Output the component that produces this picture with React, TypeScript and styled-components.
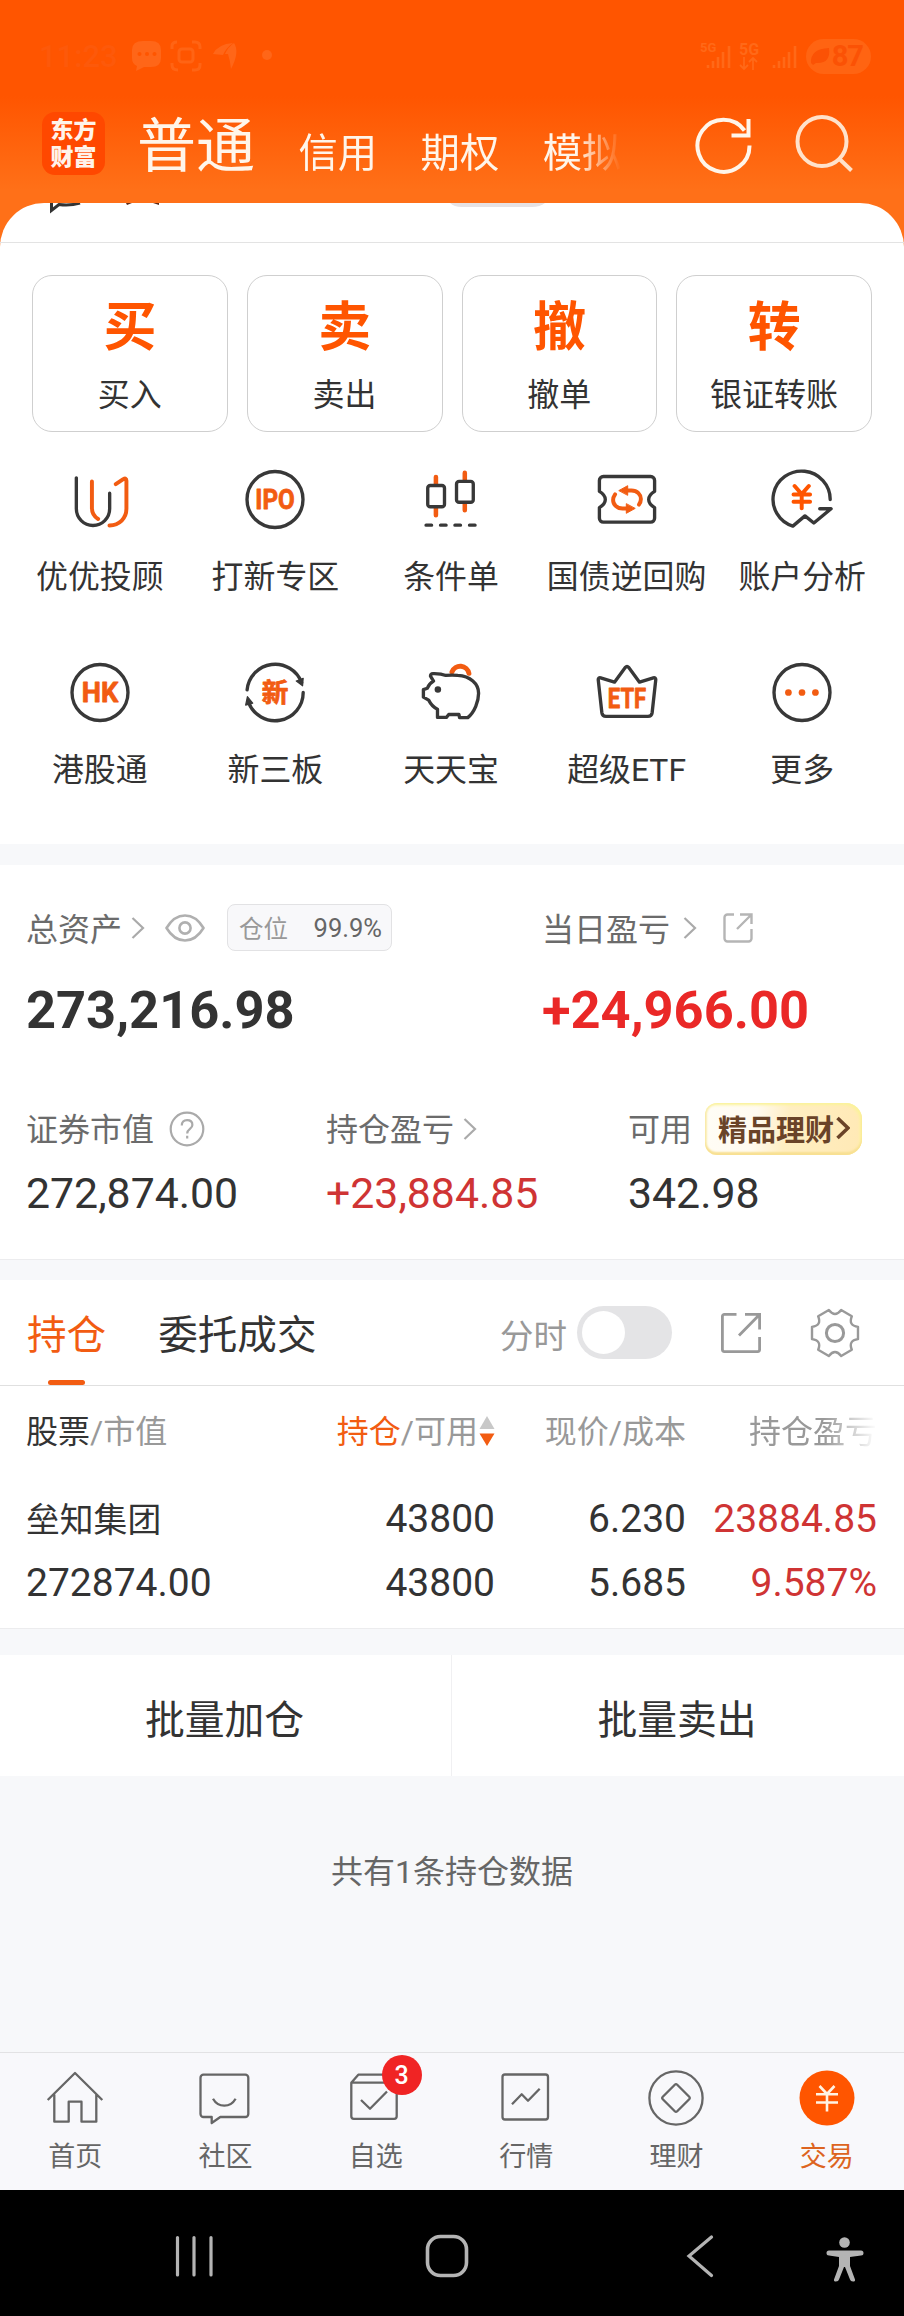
import React from 'react';
import styled, { createGlobalStyle } from 'styled-components';

const ORANGE = '#f25c12';
const BRIGHT = '#ff5500';
const INK = '#333333';
const RED = '#cf3434';

const GlobalStyle = createGlobalStyle`
  * { box-sizing: border-box; }
  body {
    margin: 0;
    background: #f7f8fa;
    color: ${INK};
    font-family: Roboto, "Noto Sans CJK SC", sans-serif;
    -webkit-font-smoothing: antialiased;
  }
`;

const Page = styled.div`
  width: 904px;
  height: 2316px;
  display: flex;
  flex-direction: column;
  overflow: hidden;
  white-space: nowrap;
  background: linear-gradient(#ff5500 0, #ff5500 96px, #ff7018 190px, #ff7018 250px, #f7f8fa 250px);
`;

/* ---------- status bar and header ---------- */

const StatusBar = styled.div`
  height: 112px;
  padding: 0 33px 0 39px;
  display: flex;
  align-items: center;
  justify-content: space-between;
`;

const StatusGroup = styled.div`
  display: flex;
  align-items: center;
`;

const Clock = styled.span`
  width: 92px;
  font-size: 31px;
  font-weight: 500;
  color: #fd590a;
`;

const Battery = styled.span`
  width: 65px;
  height: 35px;
  margin-left: 8px;
  padding-right: 8px;
  border-radius: 18px;
  background: #ff6412;
  color: #fb5205;
  display: flex;
  align-items: center;
  justify-content: space-between;
  font-size: 29px;
  font-weight: 700;
  letter-spacing: -1px;
`;

const Header = styled.header`
  height: 91px;
  padding-left: 42px;
  display: flex;
`;

const Logo = styled.div`
  width: 63px;
  height: 63px;
  border-radius: 13px;
  background: #ff4800;
  color: #fff3ea;
  padding-top: 3px;
  text-align: center;
  font: 900 23px/27px "Noto Sans CJK SC", sans-serif;
`;

const AccountTabs = styled.nav`
  width: 489px;
  height: 86px;
  margin: -5px 0 0 32px;
  display: flex;
  align-items: baseline;
  gap: 43.5px;
  overflow: hidden;
  -webkit-mask-image: linear-gradient(90deg, #000 440px, transparent 484px);
  mask-image: linear-gradient(90deg, #000 440px, transparent 484px);
`;

const AccountTab = styled.span<{ $active?: boolean }>`
  color: #fff5ea;
  font-size: ${(p) => (p.$active ? 59 : 39.3)}px;
  line-height: 80px;
`;

const HeaderIcons = styled.div`
  margin-left: 67px;
  display: flex;
  gap: 40px;
`;

/* ---------- white sheet ---------- */

const Sheet = styled.main`
  background: #fff;
  border-radius: 44px 44px 0 0;
`;

const PeekStrip = styled.div`
  height: 40px;
  border-bottom: 1px solid #e3e3e3;
  & > svg { display: block; }
`;

const Actions = styled.div`
  padding: 32px 32px 0;
  display: grid;
  grid-template-columns: repeat(4, 1fr);
  gap: 19px;
`;

const ActionCard = styled.div`
  height: 157px;
  border: 1px solid #cfcfcf;
  border-radius: 20px;
  display: flex;
  flex-direction: column;
  align-items: center;
`;

const ActionGlyph = styled.span`
  margin-top: 15px;
  color: ${BRIGHT};
  font: 700 53px/64px "Noto Sans CJK SC", sans-serif;
`;

const ActionLabel = styled.span`
  margin-top: 20px;
  font-size: 32px;
  line-height: 40px;
`;

const Shortcuts = styled.div`
  padding: 33px 14px 54px 12px;
  display: grid;
  grid-template-columns: repeat(5, 1fr);
  row-gap: 61px;
`;

const Shortcut = styled.div`
  height: 132px;
  display: flex;
  flex-direction: column;
  align-items: center;
  gap: 23px;
  font-size: 31.9px;
  line-height: 40px;
`;

const Band = styled.div<{ $h: number; $line?: boolean }>`
  height: ${(p) => p.$h}px;
  background: #f7f8fa;
  border-top: ${(p) => (p.$line ? '1px solid #ececee' : '0')};
`;

/* ---------- assets ---------- */

const Assets = styled.section`
  height: 394px;
  padding: 39px 26px 0;
  background: #fff;
`;

const AssetGrid = styled.div<{ $cols: string; $top?: number }>`
  display: grid;
  grid-template-columns: ${(p) => p.$cols};
  margin-top: ${(p) => p.$top ?? 0}px;
`;

const LabelRow = styled.div<{ $h: number }>`
  height: ${(p) => p.$h}px;
  display: flex;
  align-items: center;
  font-size: 32px;
  color: #6b6b6b;
  & > svg { flex: none; }
`;

const LabelText = styled.span<{ $drop: number }>`
  height: 38px;
  line-height: 38px;
  margin-top: ${(p) => p.$drop}px;
`;

const BigValue = styled.div<{ $up?: boolean }>`
  margin-top: 29px;
  font-size: 52.4px;
  line-height: 60px;
  font-weight: 700;
  color: ${(p) => (p.$up ? '#ea2827' : INK)};
`;

const Value = styled.div<{ $up?: boolean }>`
  margin-top: 13px;
  font-size: 42.8px;
  line-height: 50px;
  color: ${(p) => (p.$up ? RED : INK)};
`;

const PositionPill = styled.span`
  width: 165px;
  height: 47px;
  margin-left: 22px;
  padding: 0 9px 0 11px;
  border: 1px solid #e2e2e4;
  border-radius: 8px;
  background: #f8f8fa;
  display: flex;
  align-items: center;
  justify-content: space-between;
  font-size: 25.5px;
  color: #666;
`;

const Muted = styled.span`
  color: #999;
  font-size: 24.5px;
`;

const GoldPill = styled.span`
  width: 157px;
  height: 52px;
  margin-left: 13px;
  padding: 0 12px 2px 13px;
  border-radius: 12px 16px 16px 12px;
  background: linear-gradient(100deg, #fffdf6 0%, #fffaf0 32%, #ffeec2 52%, #ffe9b5 100%);
  box-shadow: inset 0 -3px 2px #f8e092, inset -2px 2px 3px #fbf39a, inset 2px 0 2px #faeeb4;
  color: #6a4328;
  display: flex;
  align-items: center;
  font-size: 29px;
  font-weight: 700;
`;

/* ---------- positions ---------- */

const PositionTabs = styled.div`
  height: 106px;
  padding: 0 44px 0 27px;
  border-bottom: 1px solid #e0e0e0;
  background: #fff;
  display: flex;
  align-items: center;
`;

const PositionTab = styled.div<{ $active?: boolean }>`
  height: 105px;
  margin-right: 52px;
  display: flex;
  flex-direction: column;
  align-items: center;
  justify-content: space-between;
  font-size: 39.6px;
  line-height: 112px;
  color: ${(p) => (p.$active ? ORANGE : INK)};
`;

const TabMarker = styled.i`
  width: 37px;
  height: 5px;
  margin-top: -12px;
  border-radius: 3px;
  background: ${ORANGE};
`;

const ToggleLabel = styled.span`
  margin: 1px 10px 0 auto;
  font-size: 33.5px;
  color: #999;
`;

const Toggle = styled.span`
  width: 95px;
  height: 53px;
  padding: 5px;
  margin: 0 48px 0 0;
  border-radius: 27px;
  background: #e4e4e6;
  &::after {
    content: '';
    display: block;
    width: 43px;
    height: 43px;
    border-radius: 50%;
    background: #fff;
  }
`;

const Table = styled.div`
  height: 242px;
  padding-top: 19px;
  background: #fff;
`;

const TableRow = styled.div<{ $h: number; $size: number }>`
  height: ${(p) => p.$h}px;
  padding: 0 26px;
  display: grid;
  grid-template-columns: 278px 191px 191px 191px;
  align-items: center;
  font-size: ${(p) => p.$size}px;
`;

const Cell = styled.div<{ $up?: boolean }>`
  display: flex;
  align-items: center;
  justify-content: flex-end;
  color: ${(p) => (p.$up ? RED : 'inherit')};
  &:first-child { justify-content: flex-start; }
`;

const HeadCell = styled(Cell)<{ $fade?: boolean }>`
  color: #999;
  & > svg { margin-top: 3px; }
  -webkit-mask-image: ${(p) => (p.$fade ? 'linear-gradient(90deg, #000 138px, transparent 191px)' : 'none')};
  mask-image: ${(p) => (p.$fade ? 'linear-gradient(90deg, #000 138px, transparent 191px)' : 'none')};
`;

const Em = styled.span<{ $c: string }>`
  color: ${(p) => p.$c};
`;

const StockName = styled.span`
  margin-bottom: 3px;
  font-size: 33.8px;
`;

const BatchBar = styled.div`
  height: 121px;
  background: #fff;
  display: grid;
  grid-template-columns: 451px 1fr;
`;

const BatchButton = styled.div`
  display: flex;
  align-items: center;
  justify-content: center;
  padding: 1px 2px 0 0;
  font-size: 39.8px;
  & + & { border-left: 1px solid #f0f0f2; }
`;

const Summary = styled.div`
  height: 276px;
  background: #f7f8fa;
  display: flex;
  justify-content: center;
  padding-top: 76px;
  font-size: 32px;
  line-height: 40px;
  color: #666;
`;

/* ---------- bottom bars ---------- */

const BottomNav = styled.nav`
  height: 138px;
  padding-right: 2px;
  border-top: 1px solid #e2e2e4;
  background: #f8f8fb;
  display: grid;
  grid-template-columns: repeat(6, 1fr);
`;

const NavItem = styled.div<{ $active?: boolean }>`
  position: relative;
  padding-top: 15px;
  display: flex;
  flex-direction: column;
  align-items: center;
  font-size: 27px;
  line-height: 34px;
  color: ${(p) => (p.$active ? '#dd6420' : '#666')};
  & > svg { margin-bottom: 12px; flex: none; }
`;

const Badge = styled.span`
  position: absolute;
  left: 81px;
  top: 2px;
  width: 40px;
  height: 40px;
  border-radius: 50%;
  background: #f02424;
  color: #fff;
  text-align: center;
  font-size: 25px;
  font-weight: 500;
  line-height: 41px;
`;

const SystemBar = styled.div`
  height: 126px;
  background: #000;
  & > svg { display: block; }
`;

const Spacer = styled.span<{ $w: number }>`
  flex: none;
  width: ${(p) => p.$w}px;
`;

/* ---------- icons ---------- */

type IconProps = { children: React.ReactNode; size?: number };

const LineIcon = ({ children, size = 70 }: IconProps) => (
  <svg
    width={size}
    height={size}
    viewBox={`${-size / 2} ${-size / 2} ${size} ${size}`}
    fill="none"
    stroke="#383838"
    strokeWidth="3.4"
    strokeLinecap="round"
    strokeLinejoin="round"
  >
    {children}
  </svg>
);

const IconText = ({ y, w, children, size = 28 }: { y: number; w: number; children: string; size?: number }) => (
  <text
    x="0"
    y={y}
    textAnchor="middle"
    textLength={w}
    lengthAdjust="spacingAndGlyphs"
    fontSize={size}
    fontWeight="700"
    fill={ORANGE}
    stroke={ORANGE}
    strokeWidth="0.8"
  >
    {children}
  </text>
);

const RING = <circle r="28.4" />;

const shortcuts: { label: string; icon: React.ReactNode }[] = [
  {
    label: '优优投顾',
    icon: (
      <g transform="translate(-.7 0)">
        <path d="M-23.3-22V9.5a16.9 16.9 0 0 0 33.8 0V-6.3" />
        <path
          stroke={ORANGE}
          strokeWidth="4"
          d="M-7.5-18.3V8.5c0 5 2.5 9 6.3 11.3M16.7-15.5l7.6-5.1q3.2-1.8 3.2 1.6V9.5c0 9.5-7 16.6-17.2 16.8"
        />
      </g>
    ),
  },
  { label: '打新专区', icon: <>{RING}<IconText y={10} w={40}>IPO</IconText></> },
  {
    label: '条件单',
    icon: (
      <>
        <path stroke={ORANGE} strokeWidth="4.6" d="M-15.3-22.7V16M14-27V11" />
        <rect x="-23.6" y="-14.2" width="17" height="21.6" rx="2.6" fill="#fff" />
        <rect x="5.6" y="-18.4" width="17" height="21.2" rx="2.6" fill="#fff" />
        <path d="M-25.3 26h5.6M-10.6 26H-5M4 26h5.6M18.8 26h5.6" />
      </>
    ),
  },
  {
    label: '国债逆回购',
    icon: (
      <>
        <path d="M-24-23.3H24a4 4 0 0 1 4 4V-8.2c-5 3-6 5.4-6 8.2s1 5.2 6 8.2V19a4 4 0 0 1-4 4H-24a4 4 0 0 1-4-4V8.2c5-3 6-5.4 6-8.2s-1-5.2-6-8.2V-19.3a4 4 0 0 1 4-4z" />
        {[0, 180].map((turn) => (
          <g key={turn} transform={`rotate(${turn})`} stroke={ORANGE}>
            <path strokeWidth="4" d="M0-9.2h4.5c6 0 9.6 4.2 9.6 8.7q0 3-2 5.8" />
            <path strokeWidth="1" fill={ORANGE} d="M-8-9.2L.7-14V-4.6z" />
          </g>
        ))}
      </>
    ),
  },
  {
    label: '账户分析',
    icon: (
      <>
        <path d="M28.6 0A29 28.6 0 1 0-9.3 27L3 16.6l9 7.3L29.5 9.4H18" />
        <path stroke={BRIGHT} strokeWidth="4" d="M-7.5-13.7L-.3-5.5l7.2-8.2M-8.6-5h16.8M-8.6 2.3H8.2M-.3-5V9" />
      </>
    ),
  },
  { label: '港股通', icon: <>{RING}<IconText y={10} w={37}>HK</IconText></> },
  {
    label: '新三板',
    icon: (
      <>
        <path d="M-28.3-2.6A28.6 28.6 0 0 1 27-10M28.6 0A28.6 28.6 0 0 1-26.8 10" />
        <path
          fill="#383838"
          strokeWidth="1.2"
          d="M21.6-11.7L28.6-14.4 28-6.8zM-22.6 10.8L-29.8 12.8-28 4.2z"
        />
        <IconText y={10} w={27} size={27}>新</IconText>
      </>
    ),
  },
  {
    label: '天天宝',
    icon: (
      <>
        <path stroke={ORANGE} strokeWidth="5" d="M1-21a9 9 0 0 1 17.2 1.6" />
        <path d="M-20.8-16.5q-.3-2.6 2.6-2.7 8-.2 13 1.9 6.5-.6 12 0C19.5-16.5 28-9 28 .8c0 8-4 19-11 24.700H8.7L8 22.3H-2.3L-4.7 25.3h-9V17q-5.6-2.4-9-9.3L-28 4.7V-3l4-1.3q1.5-4.5 6.3-7.2z" />
        <circle cx="-13.3" cy="-3" r="3.3" fill="#383838" stroke="none" />
      </>
    ),
  },
  {
    label: '超级ETF',
    icon: (
      <>
        <path d="M-29.2-13q0-2.4 2.5-1.9L-12.7-10.5-1.6-25.5q1.6-2 3.2 0L12.7-10.5 26.7-14.9q2.5-.5 2.5 1.9L25.5 20.5q-.5 3.7-4.2 3.7H-21.3q-3.7 0-4.2-3.7z" />
        <IconText y={15.3} w={39}>ETF</IconText>
      </>
    ),
  },
  {
    label: '更多',
    icon: (
      <>
        {RING}
        <g fill={ORANGE} stroke="none">
          <circle cx="-13.8" r="3.4" />
          <circle r="3.4" />
          <circle cx="13.6" r="3.4" />
        </g>
      </>
    ),
  },
];

const navItems: { label: string; icon: React.ReactNode; badge?: string; active?: boolean }[] = [
  {
    label: '首页',
    icon: <path d="M-27.3 2L0-25 27.3 2M-20.7-3.5V23.7H-6.3V3.7H6.5V23.7H21.3V-3.5" />,
  },
  {
    label: '社区',
    icon: (
      <path d="M-21.5-23.3H20.3a3 3 0 0 1 3 3V16a3 3 0 0 1-3 3H-4.7L-13.3 25V19h-8.2a3 3 0 0 1-3-3V-20.3a3 3 0 0 1 3-3zM-12 .7Q-8 7.7-.7 7.7T10.6.7" />
    ),
  },
  {
    label: '自选',
    badge: '3',
    icon: (
      <path d="M-24.7-15.3H20.7V18.3a2.5 2.5 0 0 1-2.5 2.5H-22.2a2.5 2.5 0 0 1-2.5-2.5zL-17.7-23.3H13.3L20.7-15.3M-15 2l9 8.8L11-6.5" />
    ),
  },
  {
    label: '行情',
    icon: (
      <>
        <rect x="-23.5" y="-23.5" width="45.5" height="45" rx="2.5" />
        <path d="M-14 6.3L-4.3-3.7 2 2.7 13.7-9.3" />
      </>
    ),
  },
  {
    label: '理财',
    icon: (
      <>
        <circle r="26.6" />
        <path d="M-1.2-13.3q1.2-1.2 2.4 0l12 12.1q1.2 1.2 0 2.4l-12 12.1q-1.2 1.2-2.4 0l-12-12.1q-1.2-1.2 0-2.4z" />
      </>
    ),
  },
  {
    label: '交易',
    active: true,
    icon: (
      <>
        <circle r="27.5" fill={BRIGHT} stroke="none" />
        <path stroke="#fff3e4" strokeWidth="2.6" d="M-7.5-12L0-4 7.5-12M-11-3.7H11M-11 4.5H11M0-4V13.5" />
      </>
    ),
  },
];

const Chevron = ({ ml, color = '#aaa', w = 2.2 }: { ml: number; color?: string; w?: number }) => (
  <svg width={14 + ml} height="24" viewBox={`${-ml} 0 ${14 + ml} 24`} fill="none" stroke={color} strokeWidth={w}>
    <path d="M1.5 2L12 12 1.5 22" />
  </svg>
);

const EyeIcon = () => (
  <svg width="40" height="28" viewBox="0 0 40 28" fill="none" stroke="#b0b0b0" strokeWidth="2.6">
    <path d="M1.5 14Q9 1.5 20 1.5T38.5 14Q31 26.5 20 26.5T1.5 14z" strokeLinejoin="round" />
    <circle cx="20" cy="14" r="5.6" />
  </svg>
);

const SmallShareIcon = () => (
  <svg width="30" height="30" viewBox="0 0 30 30" fill="none" stroke="#b5b5b5" strokeWidth="2.4">
    <path d="M11 1.500H4.5a3 3 0 0 0-3 3v21a3 3 0 0 0 3 3h21a3 3 0 0 0 3-3V16M17 1.5h11.5V11M28 2L14 16" />
  </svg>
);

const ShareIcon = () => (
  <svg width="42" height="42" viewBox="0 0 42 42" fill="none" stroke="#999" strokeWidth="2.8">
    <path d="M16.5 2.4H4.4a2 2 0 0 0-2 2v33.2a2 2 0 0 0 2 2h33.2a2 2 0 0 0 2-2V25M25 2.4H39.6V17.5M39.6 2.4L19 23.5" />
  </svg>
);

const HelpIcon = () => (
  <svg width="36" height="36" viewBox="0 0 36 36" fill="none" stroke="#aaa" strokeWidth="2.2">
    <circle cx="18" cy="18" r="16.3" />
    <path d="M12.8 14.5q0-5.3 5.3-5.3t5.3 4.8c0 4-5.2 4-5.2 8.5M18.2 24.8v2.7" />
  </svg>
);

/* six-lobed gear: flat lobes joined by concave curves */
const gearPath = (() => {
  const at = (deg: number, r: number) => {
    const a = (deg * Math.PI) / 180;
    return `${(r * Math.cos(a)).toFixed(2)} ${(r * Math.sin(a)).toFixed(2)}`;
  };
  let d = `M${at(-15, 23.8)}`;
  for (let k = 0; k < 6; k += 1) {
    const base = k * 60;
    d += `L${at(base + 15, 23.8)}Q${at(base + 30, 15)} ${at(base + 45, 23.8)}`;
  }
  return `${d}z`;
})();

const GearIcon = () => (
  <svg width="50" height="50" viewBox="-25 -25 50 50" fill="none" stroke="#999" strokeLinejoin="round">
    <path d={gearPath} strokeWidth="2.4" />
    <circle r="8.6" strokeWidth="3" />
  </svg>
);

const StatusIcons = () => (
  <svg width="144" height="32" viewBox="0 0 144 32" fill="none" stroke="#ff6414" strokeWidth="3">
    <path
      stroke="none"
      fill="#ff6618"
      d="M12 1h8q10 0 10 9v8q0 9-10 9h-7l-8 4 1-5Q1 24 1 18v-8q0-9 11-9zM82 14Q87 4 102 3 95 8 92 15zM94 14Q97 7 103 3q6 9-3 26-1-9-3-15z"
    />
    <g stroke="none" fill="#ff5500">
      <circle cx="8.500" cy="14" r="2" />
      <circle cx="16" cy="14" r="2" />
      <circle cx="23.500" cy="14" r="2" />
    </g>
    <path d="M41 9V6q0-4 5-4M61 2h3q5 0 5 5v2M69 23v2q0 5-5 5h-3M47 30q-6 0-6-5v-2" />
    <rect x="48" y="9" width="14" height="13" rx="3" />
    <circle cx="136" cy="15" r="5" stroke="none" fill="#ff6618" />
  </svg>
);

const SignalIcons = () => (
  <svg width="98" height="32" viewBox="0 0 98 32" fill="none" stroke="#ff6918" strokeWidth="2.6">
    <g fill="#ff6918" stroke="none" fontWeight="700">
      <text x="0" y="12" fontSize="13">5G</text>
      <text x="39" y="15" fontSize="16">5G</text>
    </g>
    <path d="M8 28v-3M13 28v-7M18 28V17M23 28V12M29 28V6M74 28v-3M79 28v-7M84 28V17M89 28V12M95 28V6" />
    <path strokeWidth="1.8" d="M44 17v12M40 25l4 4 4-4M53 30V18M49 22l4-4 4 4" />
  </svg>
);

const App = () => (
  <Page>
    <GlobalStyle />
    <StatusBar>
      <StatusGroup>
        <Clock>11:23</Clock>
        <StatusIcons />
      </StatusGroup>
      <StatusGroup>
        <SignalIcons />
        <Battery>
          <svg width="25" height="22" viewBox="0 0 25 22" fill="#fb5205">
            <path d="M5 18Q4 4 23 3q2 16-13 15l-3 2z" />
          </svg>
          87
        </Battery>
      </StatusGroup>
    </StatusBar>

    <Header>
      <Logo>东方<br />财富</Logo>
      <AccountTabs>
        <AccountTab $active>普通</AccountTab>
        <AccountTab>信用</AccountTab>
        <AccountTab>期权</AccountTab>
        <AccountTab>模拟</AccountTab>
      </AccountTabs>
      <HeaderIcons>
        <svg width="62" height="64" viewBox="0 0 62 64" fill="none" stroke="#fff5ea" strokeWidth="4">
          <path d="M56.5 33.5A26 26 0 1 1 51.5 18.5M55.5 7V23.5H38.5" />
        </svg>
        <svg width="62" height="64" viewBox="0 0 62 64" fill="none" stroke="#ffe2cb" strokeWidth="4">
          <circle cx="27" cy="29.5" r="24.5" />
          <path d="M45 47.5L56.5 58.5" />
        </svg>
      </HeaderIcons>
    </Header>

    <Sheet>
      <PeekStrip>
        <svg width="904" height="12" viewBox="0 0 904 12">
          <path d="M450 0H545Q540 4 532 4H462Q454 4 450 0z" fill="#e6e2e4" />
          <path d="M51.5 0V7.5L59 1.5Q70 3 80 0" fill="none" stroke="#333" strokeWidth="3" />
          <path d="M126 0h6l-5 2zM153 0h6v2z" fill="#5a2a18" />
        </svg>
      </PeekStrip>
      <Actions>
        {[['买', '买入'], ['卖', '卖出'], ['撤', '撤单'], ['转', '银证转账']].map(([glyph, label]) => (
          <ActionCard key={label}>
            <ActionGlyph>{glyph}</ActionGlyph>
            <ActionLabel>{label}</ActionLabel>
          </ActionCard>
        ))}
      </Actions>
      <Shortcuts>
        {shortcuts.map((s) => (
          <Shortcut key={s.label}>
            <LineIcon>{s.icon}</LineIcon>
            <span>{s.label}</span>
          </Shortcut>
        ))}
      </Shortcuts>
    </Sheet>

    <Band $h={21} />

    <Assets>
      <AssetGrid $cols="516px 1fr">
        <div>
          <LabelRow $h={47}>
            <LabelText $drop={4}>总资产</LabelText>
            <Chevron ml={9} />
            <Spacer $w={20} />
            <EyeIcon />
            <PositionPill>
              <Muted>仓位</Muted>99.9%
            </PositionPill>
          </LabelRow>
          <BigValue>273,216.98</BigValue>
        </div>
        <div>
          <LabelRow $h={47}>
            <LabelText $drop={4}>当日盈亏</LabelText>
            <Chevron ml={13} />
            <Spacer $w={26} />
            <SmallShareIcon />
          </LabelRow>
          <BigValue $up>+24,966.00</BigValue>
        </div>
      </AssetGrid>
      <AssetGrid $cols="300px 302px 1fr" $top={63}>
        <div>
          <LabelRow $h={52}>
            <LabelText $drop={1}>证券市值</LabelText>
            <Spacer $w={15} />
            <HelpIcon />
          </LabelRow>
          <Value>272,874.00</Value>
        </div>
        <div>
          <LabelRow $h={52}>
            <LabelText $drop={1}>持仓盈亏</LabelText>
            <Chevron ml={9} />
          </LabelRow>
          <Value $up>+23,884.85</Value>
        </div>
        <div>
          <LabelRow $h={52}>
            <LabelText $drop={1}>可用</LabelText>
            <GoldPill>
              精品理财
              <Chevron ml={2} color="#6a4328" w={3.6} />
            </GoldPill>
          </LabelRow>
          <Value>342.98</Value>
        </div>
      </AssetGrid>
    </Assets>

    <Band $h={21} $line />

    <PositionTabs>
      <PositionTab $active>
        持仓
        <TabMarker />
      </PositionTab>
      <PositionTab>委托成交</PositionTab>
      <ToggleLabel>分时</ToggleLabel>
      <Toggle />
      <ShareIcon />
      <Spacer $w={48} />
      <GearIcon />
    </PositionTabs>

    <Table>
      <TableRow $h={48} $size={32}>
        <HeadCell><Em $c={INK}>股票</Em>/市值</HeadCell>
        <HeadCell>
          <Em $c={ORANGE}>持仓</Em>/可用
          <svg width="17" height="30" viewBox="0 0 17 30">
            <path d="M9 0L16.5 13H1.5z" fill="#c8c8c8" />
            <path d="M9 30L16.5 17.5H1.5z" fill={ORANGE} />
          </svg>
        </HeadCell>
        <HeadCell>现价/成本</HeadCell>
        <HeadCell $fade>持仓盈亏</HeadCell>
      </TableRow>
      <TableRow $h={34} $size={10} />
      <TableRow $h={64} $size={39}>
        <Cell><StockName>垒知集团</StockName></Cell>
        <Cell>43800</Cell>
        <Cell>6.230</Cell>
        <Cell $up>23884.85</Cell>
      </TableRow>
      <TableRow $h={63} $size={39}>
        <Cell>272874.00</Cell>
        <Cell>43800</Cell>
        <Cell>5.685</Cell>
        <Cell $up>9.587%</Cell>
      </TableRow>
    </Table>

    <Band $h={27} $line />

    <BatchBar>
      <BatchButton>批量加仓</BatchButton>
      <BatchButton>批量卖出</BatchButton>
    </BatchBar>

    <Summary>共有1条持仓数据</Summary>

    <BottomNav>
      {navItems.map((n) => (
        <NavItem key={n.label} $active={n.active}>
          <svg
            width="60"
            height="60"
            viewBox="-30 -30 60 60"
            fill="none"
            stroke="#666"
            strokeWidth="2.3"
            strokeLinejoin="round"
          >
            {n.icon}
          </svg>
          {n.label}
          {n.badge && <Badge>{n.badge}</Badge>}
        </NavItem>
      ))}
    </BottomNav>

    <SystemBar>
      <svg width="904" height="126" viewBox="0 0 904 126" fill="none" stroke="#b4b4b4" strokeWidth="3.2" strokeLinecap="round">
        <path d="M177.500 47.500V85M194 47.500V85M211 47.500V85" />
        <rect x="427.500" y="46.500" width="39" height="39" rx="13" strokeWidth="3.6" />
        <path d="M711.500 47L689 66l22.500 19.500" />
        <g fill="#b4b4b4" stroke="none">
          <circle cx="844.500" cy="52.500" r="5.3" />
          <path d="M829 60.500h32a2.500 2.500 0 0 1 0 5l-11 1.500v9l5 13.500q.5 2-2 2t-3-2l-5-12.500h-1l-5 12.500q-.5 2-3 2t-2-2l5-13.500v-9l-10-1.500a2.500 2.500 0 0 1 0-5z" />
        </g>
      </svg>
    </SystemBar>
  </Page>
);

export default App;
